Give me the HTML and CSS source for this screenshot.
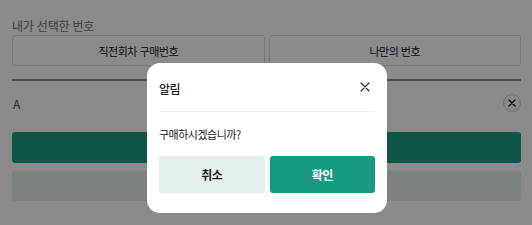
FILE: index.html
```html
<!DOCTYPE html>
<html lang="ko">
<head>
    <meta charset="UTF-8">
    <meta name="viewport" content="width=device-width, initial-scale=1.0">
    <title>번호 선택</title>
    <link rel="stylesheet" href="styles.css">
</head>
<body>
    <div class="page">
        <div class="section-title">내가 선택한 번호</div>
        <div class="pick-row">
            <button class="pick-btn">직전회차 구매번호</button>
            <button class="pick-btn">나만의 번호</button>
        </div>
        <div class="divider"></div>
        <div class="slot-row">
            <span class="slot-label">A</span>
            <span class="slot-clear">
                <svg width="10" height="10" viewBox="0 0 10 10">
                    <path d="M2 2 L8 8 M8 2 L2 8" stroke="#222" stroke-width="1.4" stroke-linecap="round"/>
                </svg>
            </span>
        </div>
        <div class="buy-bar"></div>
        <div class="sub-bar"></div>
    </div>

    <div class="dim">
        <div class="modal">
            <div class="modal-header">
                <span class="modal-title">알림</span>
                <svg class="modal-close" width="10" height="10" viewBox="0 0 10 10">
                    <path d="M1 1 L9 9 M9 1 L1 9" stroke="#333" stroke-width="1.2" stroke-linecap="round"/>
                </svg>
            </div>
            <div class="modal-body">구매하시겠습니까?</div>
            <div class="modal-actions">
                <button class="btn btn-cancel">취소</button>
                <button class="btn btn-ok">확인</button>
            </div>
        </div>
    </div>
</body>
</html>
```

FILE: styles.css
```css
:root {
    --green: #179b80;
    --green-light: #e3f0ed;
    --text: #222;
    --gray: #777;
}
body {
    margin: 0;
    background: #fff;
    font-family: 'Noto Sans CJK KR', 'Noto Sans', sans-serif;
    color: var(--text);
    overflow: hidden;
}
.page {
    padding: 17px 11px 0 12px;
}
.section-title {
    font-size: 12px;
    line-height: 18px;
    letter-spacing: -0.2px;
    color: var(--gray);
}
.pick-row {
    display: grid;
    grid-template-columns: 1fr 1fr;
    gap: 4px;
}
.pick-btn {
    height: 31px;
    background: #fff;
    border: 1px solid #ddd;
    border-radius: 3px;
    font-family: inherit;
    font-size: 11px;
    letter-spacing: -0.5px;
    color: var(--text);
}
.divider {
    margin-top: 13px;
    height: 2px;
    background: #949494;
}
.slot-row {
    margin-top: 13px;
    height: 18px;
    display: flex;
    align-items: center;
    justify-content: space-between;
}
.slot-label {
    font-size: 12px;
    color: #555;
    padding-left: 1px;
}
.slot-clear {
    width: 18px;
    height: 18px;
    border: 1px solid #d0d0d0;
    border-radius: 50%;
    box-sizing: border-box;
    display: flex;
    align-items: center;
    justify-content: center;
}
.buy-bar {
    margin-top: 20px;
    height: 31px;
    border-radius: 3px;
    background: #1a9c84;
}
.sub-bar {
    margin-top: 8px;
    height: 30px;
    border-radius: 3px;
    background: #e5efed;
}
.dim {
    position: fixed;
    inset: 0;
    background: rgba(0, 0, 0, 0.46);
    display: flex;
    justify-content: center;
    align-items: flex-start;
    padding-top: 63px;
    padding-left: 2px;
}
.modal {
    width: 240px;
    height: 150px;
    box-sizing: border-box;
    background: #fff;
    border-radius: 13px;
    padding: 0 12px;
}
.modal-header {
    height: 48px;
    display: flex;
    align-items: center;
    justify-content: space-between;
    border-bottom: 1px solid #eee;
}
.modal-title {
    font-size: 12px;
    font-weight: 500;
    letter-spacing: -0.5px;
    padding-top: 2px;
}
.modal-close {
    margin-right: 5px;
}
.modal-body {
    height: 44px;
    display: flex;
    align-items: center;
    font-size: 11px;
    letter-spacing: -0.5px;
}
.modal-actions {
    display: grid;
    grid-template-columns: 1fr 1fr;
    gap: 5px;
}
.btn {
    height: 37px;
    border: none;
    border-radius: 3px;
    font-family: inherit;
    font-size: 12px;
    font-weight: 700;
    letter-spacing: -0.5px;
}
.btn-cancel {
    background: var(--green-light);
    color: var(--text);
}
.btn-ok {
    background: var(--green);
    color: #fff;
}
```
